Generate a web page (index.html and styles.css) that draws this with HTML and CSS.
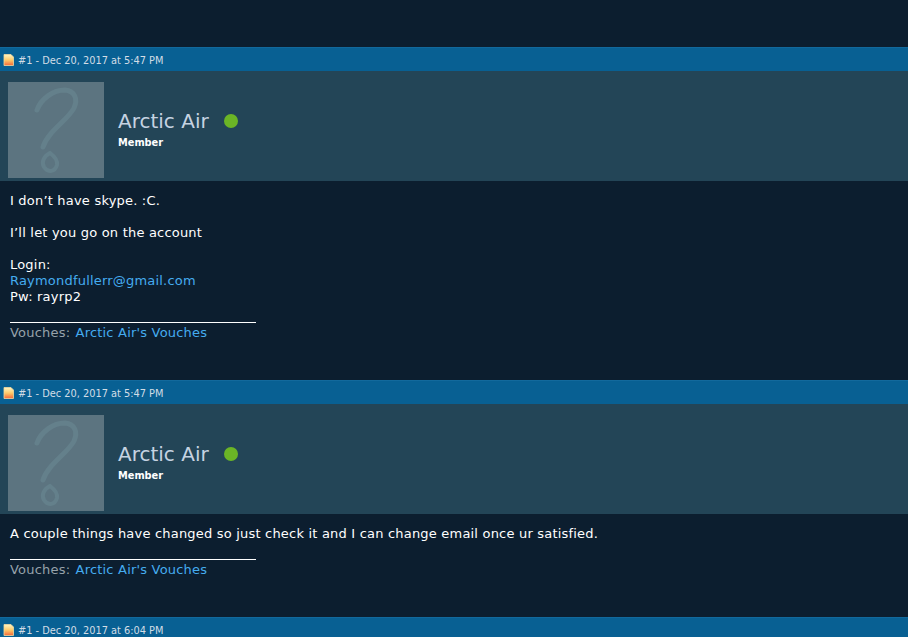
FILE: index.html
```html
<!DOCTYPE html>
<html lang="en">
  <head>
    <meta charset="utf-8" />
    <title>Arctic Air - Posts</title>
    <link rel="stylesheet" href="styles.css">
  </head>
  <body>
    <main class="thread">
      <article class="post">
        <div class="post-head">
          <svg class="post-icon" viewBox="0 0 12 12"><use href="#note"></use></svg>
          <span>#1 - Dec 20, 2017 at 5:47 PM</span>
        </div>
        <div class="author">
          <svg class="avatar" viewBox="0 0 96 96"><use href="#no-avatar"></use></svg>
          <div class="author-info">
            <div class="author-name">Arctic Air <span class="online"></span></div>
            <div class="author-rank">Member</div>
          </div>
        </div>
        <div class="post-body post-body-long">
          <p>I don’t have skype. :C.<br /><br />I’ll let you go on the account<br /><br />Login:<br /><a href="#">Raymondfullerr@gmail.com</a><br />Pw: rayrp2</p>
          <div class="signature">
            <div class="sig-rule"></div>
            Vouches: <a href="#">Arctic Air's Vouches</a>
          </div>
        </div>
      </article>

      <article class="post">
        <div class="post-head">
          <svg class="post-icon" viewBox="0 0 12 12"><use href="#note"></use></svg>
          <span>#1 - Dec 20, 2017 at 5:47 PM</span>
        </div>
        <div class="author">
          <svg class="avatar" viewBox="0 0 96 96"><use href="#no-avatar"></use></svg>
          <div class="author-info">
            <div class="author-name">Arctic Air <span class="online"></span></div>
            <div class="author-rank">Member</div>
          </div>
        </div>
        <div class="post-body">
          <p>A couple things have changed so just check it and I can change email once ur satisfied.</p>
          <div class="signature">
            <div class="sig-rule"></div>
            Vouches: <a href="#">Arctic Air's Vouches</a>
          </div>
        </div>
      </article>

      <article class="post">
        <div class="post-head">
          <svg class="post-icon" viewBox="0 0 12 12"><use href="#note"></use></svg>
          <span>#1 - Dec 20, 2017 at 6:04 PM</span>
        </div>
      </article>
    </main>

    <svg class="defs" width="0" height="0">
      <defs>
        <linearGradient id="note-fill" x1="0" y1="0" x2="0" y2="1">
          <stop offset="0" stop-color="#fff6c4" />
          <stop offset="0.5" stop-color="#fecb6a" />
          <stop offset="1" stop-color="#f4683a" />
        </linearGradient>
        <symbol id="note" viewBox="0 0 12 12">
          <path d="M1 .5H8L10.5 3V11.5H1Z" fill="url(#note-fill)" stroke="#f0d9a0" stroke-width=".8" />
        </symbol>
        <symbol id="no-avatar" viewBox="0 0 96 96">
          <rect width="96" height="96" fill="#5c7480" />
          <path d="M29 28C33 17 45 8 57 8C67 9 70 17 66 26C60 38 40 49 35 65" fill="none" stroke="#64808b" stroke-width="5" stroke-linecap="round" />
          <path d="M42 71C36 74 33 80 36 85C40 91 47 90 49 83C50 78 46 74 42 71Z" fill="none" stroke="#64808b" stroke-width="4" />
        </symbol>
      </defs>
    </svg>
  </body>
</html>
```

FILE: styles.css
```css
html,
body {
  margin: 0;
  height: 637px;
  overflow: hidden;
  background: #0c1e2f;
}

body {
  font-family: "DejaVu Sans", Verdana, sans-serif;
  font-size: 13px;
  line-height: 16px;
  letter-spacing: 0.2px;
  color: #fff;
}

a {
  color: #45acf0;
  text-decoration: none;
}

.thread {
  padding-top: 47px;
}

.post-head {
  display: flex;
  align-items: center;
  gap: 3px;
  height: 23px;
  padding-left: 3px;
  border-top: 1px solid #12699c;
  background: #086093;
  color: #d2dde6;
  font-family: "DejaVu Sans Condensed", "DejaVu Sans", sans-serif;
  font-size: 10.9px;
  letter-spacing: 0;
}

.post-head span {
  padding-top: 2px;
}

.post-icon {
  width: 12px;
  height: 12px;
  flex: none;
  margin-top: 1px;
}

.author {
  display: flex;
  align-items: flex-start;
  gap: 14px;
  height: 110px;
  box-sizing: border-box;
  padding: 11px 0 0 8px;
  background: #234557;
}

.avatar {
  width: 96px;
  height: 96px;
  flex: none;
}

.author-info {
  margin-top: 27px;
}

.author-name {
  display: flex;
  align-items: center;
  gap: 15px;
  font-size: 20px;
  line-height: 24px;
  letter-spacing: 0;
  color: #c6d3e2;
}

.online {
  width: 14px;
  height: 14px;
  border-radius: 50%;
  background: #6bb526;
}

.author-rank {
  margin-top: 3px;
  font-family: "DejaVu Sans Condensed", "DejaVu Sans", sans-serif;
  font-size: 10.9px;
  font-weight: bold;
  line-height: 14px;
  letter-spacing: 0;
}

.post-body {
  height: 103px;
  padding: 12px 10px 0;
  box-sizing: border-box;
}

.post-body-long {
  height: 199px;
}

.post-body p {
  margin: 0;
}

.signature {
  color: #96a2aa;
  margin-top: 17px;
}

.signature a {
  margin-left: 1px;
}

.sig-rule {
  width: 246px;
  height: 1px;
  margin-bottom: 2px;
  background: #fff;
}

.defs {
  position: absolute;
}
```
